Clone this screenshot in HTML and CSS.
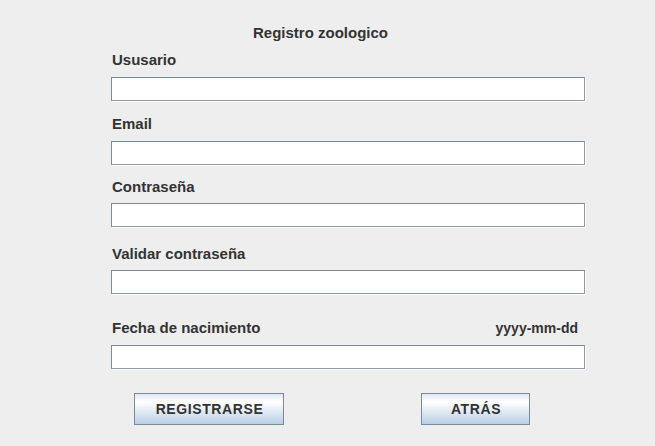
FILE: index.html
```html
<!DOCTYPE html>
<html>
<head>
<meta charset="utf-8">
<link rel="stylesheet" href="styles.css">
</head>
<body>
<div class="form">
  <div class="title">Registro zoologico</div>
  <div class="label l-user">Ususario</div>
  <div class="field"></div>
  <div class="label l-email">Email</div>
  <div class="field"></div>
  <div class="label l-pass">Contraseña</div>
  <div class="field"></div>
  <div class="label l-valid">Validar contraseña</div>
  <div class="field"></div>
  <div class="label l-date"><span>Fecha de nacimiento</span><span class="hint">yyyy-mm-dd</span></div>
  <div class="field"></div>
  <div class="buttons">
    <div class="btn btn-reg">REGISTRARSE</div>
    <div class="btn btn-back">ATRÁS</div>
  </div>
</div>
</body>
</html>
```

FILE: styles.css
```css
html, body {
  margin: 0;
  padding: 0;
  background: #eeeeee;
  width: 655px;
  height: 446px;
  overflow: hidden;
}
.form {
  display: flex;
  flex-direction: column;
  padding-left: 111px;
  width: 474px;
  font-family: "Liberation Sans", Arial, sans-serif;
  font-weight: bold;
  font-size: 15px;
  color: #333333;
}
.title {
  margin-top: 24px;
  height: 17px;
  line-height: 17px;
  padding-left: 142px;
}
.label {
  height: 17px;
  line-height: 17px;
  padding-left: 1px;
  margin-bottom: 9px;
}
.l-user { margin-top: 10px; }
.l-email { margin-top: 14px; }
.l-pass { margin-top: 13px; margin-bottom: 8px; }
.l-valid { margin-top: 18px; margin-bottom: 8px; }
.l-date {
  margin-top: 25px;
  display: flex;
  justify-content: space-between;
  align-items: baseline;
  padding-right: 7px;
}
.hint {
  font-size: 14px;
}
.field {
  height: 22px;
  background: #ffffff;
  border: 1px solid #7a8a99;
  border-right-color: #8e9aa6;
  border-bottom-color: #8e9aa6;
  box-shadow: 1px 1px 0 #ffffff;
}
.buttons {
  display: flex;
  margin-top: 24px;
  padding-left: 23px;
  gap: 137px;
}
.btn {
  height: 30px;
  box-sizing: content-box;
  border: 1px solid #7a8a99;
  background: linear-gradient(to bottom, #dde8f3 0%, #ffffff 25%, #eef3f9 45%, #b8cfe5 100%);
  display: flex;
  align-items: center;
  justify-content: center;
  color: #333333;
  font-size: 14px;
  letter-spacing: 0.6px;
  padding-left: 1px;
}
.btn-reg { width: 147px; }
.btn-back { width: 106px; }
```
